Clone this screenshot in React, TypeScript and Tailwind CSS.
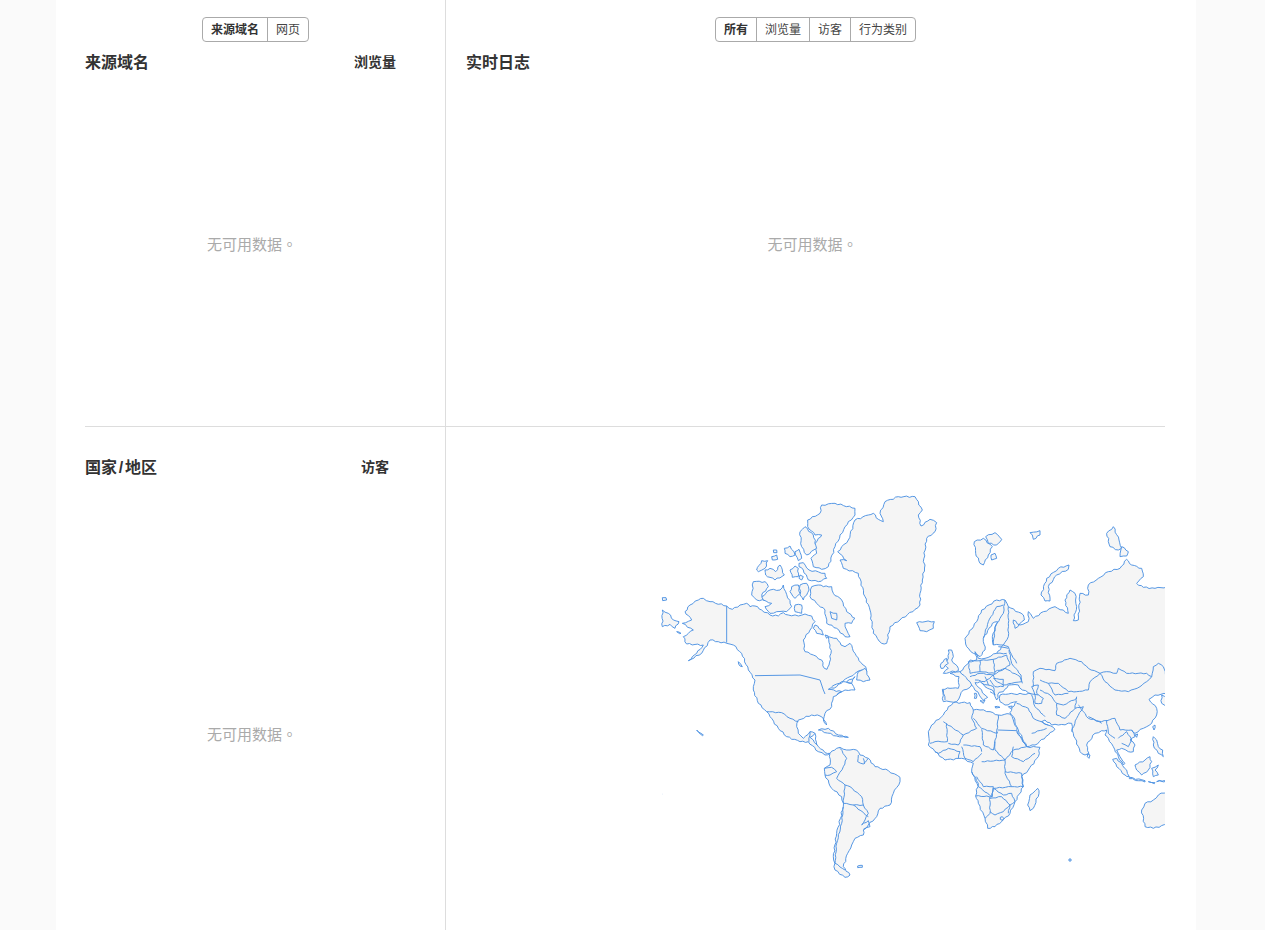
const land = [
  // north + central america
  "90,365 105,345 130,330 145,325 165,335 215,348 232,358 255,345 275,340 285,350 300,348 320,360 345,375 370,378 385,368 400,375 430,378 450,372 470,378 480,395 465,420 445,450 450,485 475,495 500,510 508,535 516,538 522,525 528,490 525,465 520,440 545,445 558,465 570,470 585,460 600,490 612,512 632,530 635,545 620,540 600,550 585,560 565,572 545,590 520,598 560,605 535,620 530,650 510,670 505,690 515,705 507,690 495,678 470,675 430,690 425,710 430,730 445,745 465,725 480,730 465,742 475,750 490,770 510,788 525,790 510,795 490,785 460,755 435,755 395,740 370,715 345,680 335,665 310,640 295,600 300,570 280,540 260,490 235,465 215,460 190,455 165,450 140,490 100,512 125,490 145,465 95,462 85,440 115,420 82,400 110,390",
  // south america
  "525,790 545,775 555,772 575,780 605,780 615,795 640,805 660,830 700,842 735,862 735,875 715,910 705,945 675,955 665,980 640,1005 625,1020 625,1035 600,1045 590,1065 578,1090 565,1130 585,1155 570,1162 540,1140 535,1100 545,1030 565,950 560,920 530,895 510,855 508,835 525,825",
  // greenland
  "548,185 580,150 600,90 640,75 655,70 670,88 685,95 675,70 690,35 730,20 780,20 802,60 790,75 798,108 825,88 845,98 840,125 815,145 805,215 810,225 802,270 795,310 795,345 780,358 735,390 705,410 695,460 680,460 655,430 645,360 630,320 610,250 565,235 555,210 575,212",
  // arctic islands
  "458,90 495,70 500,45 540,40 600,55 600,75 570,110 540,170 520,230 500,238 475,230 468,205 485,190 478,170 490,145 500,135 480,135 458,110",
  "435,125 450,110 475,135 485,175 455,195 440,170",
  "305,240 320,212 338,212 330,235 310,245",
  "355,180 365,180 366,188 356,188",
  "350,200 365,195 368,208 352,210",
  "388,175 405,168 420,195 405,200 390,190",
  "420,185 432,178 440,205 430,212",
  "330,240 345,235 362,245 375,225 388,255 360,270 345,262 332,255",
  "405,240 420,228 430,235 430,260 412,262",
  "435,255 445,260 440,270 432,265",
  "432,220 445,218 462,240 510,250 515,265 490,275 460,270 445,240 432,230",
  "295,275 330,275 340,290 320,315 330,332 305,330 290,315",
  "320,320 345,300 375,300 385,285 392,305 410,350 395,365 365,365 345,370 330,350 350,340 325,330",
  "410,290 430,285 435,310 420,325 405,305",
  "435,285 455,280 462,300 445,330 435,315",
  "470,290 490,285 505,290 530,290 535,310 560,330 575,365 600,385 590,400 570,400 575,420 585,440 570,440 545,415 515,400 510,360 490,345 465,320",
  "525,365 545,370 545,390 530,385",
  "420,345 440,345 440,370 420,365",
  "480,405 500,420 505,435 485,430 475,415",
  "510,435 520,438 515,445",
  "575,575 600,560 590,580",
  "610,545 630,535 645,570 625,575 605,570",
  "22,360 40,370 55,390 72,395 60,415 45,403 22,410",
  "22,323 33,323 35,330 23,332",
  "65,425 78,430 74,431",
  "250,515 262,530 255,528",
  "125,720 145,735 143,737",
  "490,720 520,715 550,735 580,742 545,738",
  "608,1128 622,1126 622,1132 608,1133",
  // iceland, svalbard, novaya zemlya etc
  "785,398 810,395 838,395 835,415 815,425 795,422 790,408",
  "958,155 985,145 1012,170 1000,195 985,225 975,220 962,190",
  "992,140 1020,128 1040,148 1025,165 1000,160",
  "1008,195 1020,190 1025,205 1010,210",
  "1125,128 1155,122 1155,135 1135,148 1132,135",
  "1158,315 1175,265 1210,235 1242,225 1240,238 1205,255 1180,290 1185,333 1170,333",
  "1355,130 1375,110 1392,150 1400,175 1390,180 1365,170",
  "1400,170 1420,185 1415,198 1395,200",
  // eurasia
  "865,635 862,598 885,595 910,595 912,560 885,550 915,545 940,520 945,510 965,510 960,485 970,505 990,505 1025,490 1045,465 1015,465 1012,440 1028,395 1012,400 985,445 990,480 975,500 955,490 935,470 930,445 965,395 980,360 1025,330 1050,330 1060,350 1105,375 1108,390 1080,415 1075,390 1095,405 1120,395 1120,365 1135,385 1165,365 1200,350 1240,370 1230,330 1245,300 1260,310 1265,350 1255,392 1270,390 1275,310 1300,315 1300,285 1330,265 1360,245 1395,235 1415,208 1430,225 1460,235 1465,260 1445,280 1465,292 1500,295 1545,290 1545,610 1500,615 1482,628 1505,655 1505,675 1490,700 1465,715 1440,730 1430,720 1440,740 1425,750 1440,765 1435,785 1420,785 1400,775 1385,780 1395,800 1410,820 1405,825 1390,800 1375,770 1360,745 1350,735 1355,720 1340,722 1320,730 1295,765 1302,790 1290,795 1275,785 1255,730 1250,700 1210,705 1190,705 1170,690 1160,695 1178,705 1195,712 1200,718 1180,735 1140,765 1115,770 1085,710 1075,680 1065,668 1080,640 1085,635 1050,645 1035,635 1035,615 1060,612 1130,612 1102,600 1090,585 1060,585 1045,605 1032,607 1025,630 1020,620 1012,600 990,590 975,575 960,578 990,615 998,622 985,630 950,585 945,592 925,600 905,635",
  "880,480 890,480 895,500 890,510 910,535 910,542 865,550 880,535 870,525 880,505",
  "858,520 875,505 880,520 865,535 858,535",
  "958,610 964,610 964,625 958,625",
  "975,632 990,630 985,640",
  "1020,650 1035,652 1022,654",
  "1060,650 1072,648 1066,656",
  // africa
  "820,725 830,705 865,675 880,650 895,638 945,638 955,660 975,660 1005,665 1030,675 1065,672 1075,690 1090,730 1115,770 1155,772 1150,800 1120,840 1100,860 1105,890 1080,935 1065,970 1040,995 1020,1010 998,1015 990,985 970,940 962,918 970,880 950,845 955,820 920,805 870,810 840,785 820,765 822,745",
  "1148,895 1152,910 1135,955 1125,962 1118,945 1125,915",
  "1298,792 1305,795 1302,805 1297,800",
  "1242,1107 1248,1107 1248,1113 1242,1113",
  // asia islands + australia
  "1373,808 1385,805 1415,840 1423,860 1410,855 1385,830",
  "1423,862 1470,872 1470,876 1423,866",
  "1440,825 1470,810 1485,800 1490,815 1480,840 1460,855 1445,840",
  "1490,835 1510,825 1500,840 1510,855 1495,860",
  "1495,740 1505,750 1510,770 1523,780 1525,800 1510,790 1495,765",
  "1493,710 1500,705 1497,720",
  "1440,735 1448,732 1445,742",
  "1520,615 1535,625 1535,650 1520,640",
  "1480,875 1500,878 1498,881",
  "1505,875 1545,868 1545,873",
  "1545,900 1510,915 1495,930 1470,940 1460,960 1470,1010 1495,1015 1545,1000",
];

const borders = [
  // alaska, us, mexico
  "335,665 380,668 405,685 430,695",
  "465,725 462,755",
  "480,730 485,765",
  "530,590 560,575 590,580 600,600 570,600 545,615",
  // south america
  "555,775 575,805 565,830 545,865 570,885 585,890 620,920 625,945 640,970 630,990 620,1005",
  "570,885 565,940 595,945 625,945",
  "595,945 640,980",
  "565,950 560,1000 545,1060 540,1120 570,1140",
  "620,1005 640,992 645,1010 625,1018",
  "610,795 608,815 625,822 640,805",
  "625,805 628,822",
  "508,835 530,832 545,845 525,855 510,855",
  // scandinavia, russia west
  "1015,465 1020,410 1045,370 1050,330",
  "985,445 1000,395 1025,350 1045,345",
  "1045,465 1060,440 1060,400 1060,350",
  "1045,465 1060,470 1065,485 1085,520",
  // europe
  "940,515 975,512 975,545 945,550 940,515",
  "975,512 1015,508 1020,550 975,545",
  "1015,508 1055,495 1065,525 1050,535 1020,545",
  "1025,490 1055,490",
  "1030,470 1060,475",
  "1015,555 1050,535 1095,560 1100,575 1070,580 1045,585 1020,570 1015,555",
  "1015,565 1045,568 1045,590 1020,590",
  "945,560 975,550 1015,555 990,575 960,570",
  "980,580 1015,590 1020,615 1005,605",
  "990,560 1000,585",
  "1020,590 1005,570",
  "915,545 945,575 950,585",
  "865,600 870,630",
  "1062,480 1070,520 1098,555 1102,580",
  "1130,612 1150,615",
  "1130,615 1140,650 1170,680",
  "1085,640 1120,655 1135,685 1180,705",
  "1130,730 1175,715",
  "1130,590 1150,585 1145,610 1165,625 1160,640 1140,640 1140,615 1130,590",
  "1135,590 1135,545 1155,535 1200,542 1205,520 1245,505 1280,515 1300,535 1335,550 1355,545 1385,550 1390,535 1415,550 1475,550 1490,560 1495,530 1510,520 1525,530 1535,560",
  "1335,550 1350,575 1380,600 1420,605 1455,590 1475,575 1490,560",
  "1335,550 1305,575 1300,600 1265,605 1240,605 1210,580 1180,580 1155,570",
  "1180,580 1200,615 1240,610",
  "1155,600 1185,615 1205,640 1225,645 1265,625",
  "1205,640 1205,675 1230,685 1260,655 1265,620",
  "1260,655 1285,650 1265,685 1250,725",
  "1270,645 1300,685 1340,695 1380,685 1395,720",
  "1300,680 1340,700",
  "1355,690 1360,730 1380,745",
  "1390,745 1415,725 1430,750 1420,770 1400,760",
  "1395,720 1430,720",
  // africa
  "865,695 925,735 965,715 950,685 955,660",
  "875,700 877,755 840,755 825,760",
  "925,735 910,765 880,760",
  "955,685 980,715 1025,730 1030,675",
  "980,718 985,765 1015,780 1020,750 1028,725",
  "1020,755 1020,780 1050,810 1075,780 1115,770 1085,725",
  "1075,770 1070,800 1105,815 1140,790",
  "925,765 975,770 980,785",
  "920,770 930,805 955,815 980,790",
  "980,815 1050,810 1050,850 1070,890 1015,895 1010,920 970,890 950,845",
  "1050,845 1100,850 1105,890 1070,890",
  "965,860 985,890 1015,890 1012,920 962,918",
  "1005,920 1005,970 990,985",
  "1005,925 1040,920 1065,945 1045,965 1020,975 1005,965",
  "1015,895 1045,915 1070,910 1080,935 1065,945 1060,970",
  "840,785 850,790 880,775 915,785 910,805",
];

// these run dead straight in the reference
const straight = [
  "215,348 215,458",
  "300,557 435,555 495,570 505,600 510,612",
  "1028,720 1085,722",
];

const lesotho = "1036,982 1042,980 1046,985 1042,991 1036,988";

// coastlines are roughly traced, so break long edges up to look like real coast
function rough(pts: string, amp: number, closed: boolean) {
  const list = pts.split(" ").map((p) => p.split(",").map(Number));
  const out: string[] = [];
  const last = closed ? list.length : list.length - 1;
  for (let i = 0; i < last; i++) {
    const [x1, y1] = list[i];
    const [x2, y2] = list[(i + 1) % list.length];
    const len = Math.hypot(x2 - x1, y2 - y1);
    const steps = Math.max(1, Math.round(len / 9));
    for (let s = 0; s < steps; s++) {
      const t = s / steps;
      const n = s === 0 ? 0 : Math.sin(x1 * 12.9 + y1 * 78.2 + s * 4.1) * amp;
      out.push(`${(x1 + (x2 - x1) * t - ((y2 - y1) / len) * n).toFixed(1)},${(y1 + (y2 - y1) * t + ((x2 - x1) / len) * n).toFixed(1)}`);
    }
  }
  if (!closed) out.push(list[list.length - 1].join(","));
  return out.join(" ");
}

function WorldMap() {
  return (
    <svg viewBox="0 0 1530 1170" className="w-[510px] h-[390px] block" fill="none" stroke="#4a90e2" strokeWidth="2.8" strokeLinejoin="round">
      <g fill="#f5f5f5">
        {land.map((pts, i) => (
          <polygon key={i} points={rough(pts, 2.2, true)} />
        ))}
      </g>
      {borders.map((pts, i) => (
        <polyline key={i} points={rough(pts, 1.4, false)} />
      ))}
      {straight.map((pts, i) => (
        <polyline key={i} points={pts} />
      ))}
      <polygon points={lesotho} />
      <circle cx="23" cy="912" r="1" fill="#9bbde6" stroke="none" />
    </svg>
  );
}

const Toggle = ({ items }: { items: string[] }) => (
  <div className="flex h-[25px] border border-[#aaaaaa] rounded-[4px] bg-white">
    {items.map((t, i) => (
      <div
        key={t}
        className={`px-[8px] leading-[24px] text-[12px] ${i === 0 ? "font-bold text-[#333333]" : "text-[#444444] border-l border-[#aaaaaa]"}`}
      >
        {t}
      </div>
    ))}
  </div>
);

const Empty = ({ height }: { height: string }) => (
  <div className={`${height} flex items-center justify-center pr-[6px] text-[15px] text-[#aaaaaa] font-['Noto_Sans_CJK_TC',sans-serif]`}>无可用数据。</div>
);

const Metric = ({ title }: { title: React.ReactNode }) => (
  <div className="flex-1 pt-[2px] text-[16px]">{title}</div>
);

export default function App() {
  return (
    <div className="h-[930px] overflow-hidden bg-[#fafafa] font-['Liberation_Sans','Noto_Sans_CJK_SC',sans-serif]">
      <div className="ml-[56px] w-[1140px] h-full bg-white pl-[29px] pr-[31px]">
        <div className="grid grid-cols-[361px_719px] grid-rows-[427px_503px] h-full">
          <div className="border-r border-b border-[#dddddd] pr-[20px] pt-[17px]">
            <div className="flex justify-center pl-[1px] mb-[8px]">
              <Toggle items={["来源域名", "网页"]} />
            </div>
            <div className="flex h-[24px] items-center font-bold text-[#333333]">
              <Metric title="来源域名" />
              <div className="w-[100px] text-center text-[14px]">浏览量</div>
            </div>
            <Empty height="h-[340px]" />
          </div>
          <div className="border-b border-[#dddddd] pl-[20px] pt-[17px]">
            <div className="flex justify-center mb-[8px]">
              <Toggle items={["所有", "浏览量", "访客", "行为类别"]} />
            </div>
            <div className="flex h-[24px] items-center font-bold text-[#333333]">
              <Metric title="实时日志" />
            </div>
            <Empty height="h-[340px]" />
          </div>
          <div className="border-r border-[#dddddd] pr-[20px] pt-[28px]">
            <div className="flex h-[24px] items-center font-bold text-[#333333]">
              <Metric title={<>国家<span className="inline-block w-[8px] text-center">/</span>地区</>} />
              <div className="w-[100px] text-center text-[14px]">访客</div>
            </div>
            <Empty height="h-[510px]" />
          </div>
          <div className="flex justify-end pt-[63px]">
            <WorldMap />
          </div>
        </div>
      </div>
    </div>
  );
}
